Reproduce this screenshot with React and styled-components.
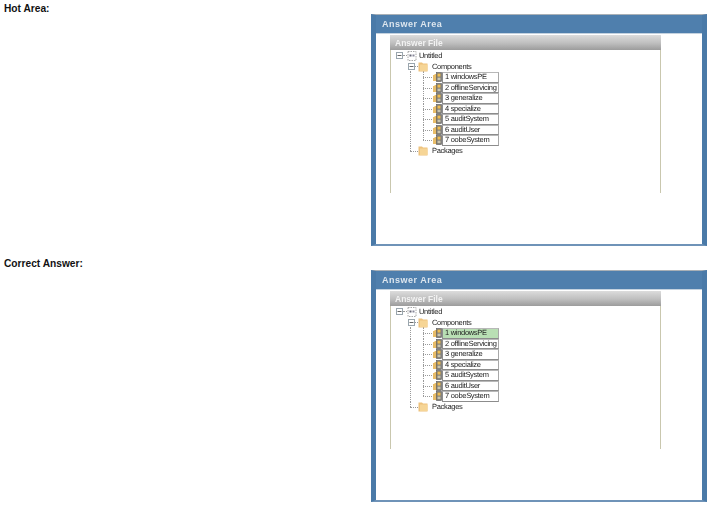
import styled, { createGlobalStyle } from "styled-components";

const GlobalStyle = createGlobalStyle`
  html, body {
    margin: 0;
    padding: 0;
    background: #fff;
  }
  body {
    font-family: "Liberation Sans", Arial, sans-serif;
  }
`;

const Page = styled.div`
  width: 712px;
  height: 508px;
  overflow: hidden;
  display: flex;
  flex-direction: column;
`;

const Section = styled.section`
  height: 256px;
  flex: none;
  display: flex;
`;

const Label = styled.div`
  width: 371px;
  flex: none;
  padding: ${(p) => p.$top}px 0 0 4px;
  box-sizing: border-box;
  font-size: 10.2px;
  font-weight: 700;
  line-height: 11px;
  color: #111;
`;

const Panel = styled.div`
  width: 336px;
  height: 232px;
  margin-top: 14px;
  box-sizing: border-box;
  border-top: 1px solid #a9b0b6;
  border-left: 5px solid #4a7aa8;
  border-right: 5px solid #4a7aa8;
  border-bottom: 2px solid #6f93b8;
  background: #fff;
  display: flex;
  flex-direction: column;
  filter: blur(0.4px);
`;

const TitleBar = styled.div`
  height: 18px;
  flex: none;
  padding-left: 6px;
  background: #4f7fad;
  border-bottom: 1px solid #c4d2df;
  color: #dde6ee;
  font-size: 9px;
  font-weight: 700;
  letter-spacing: 0.5px;
  line-height: 19px;
`;

const FileBox = styled.div`
  width: 271px;
  height: 158px;
  margin: 1px 0 0 14px;
  box-sizing: border-box;
  border-left: 1px solid #c9c7ae;
  border-right: 1px solid #c9c7ae;
`;

const FileHeader = styled.div`
  height: 15px;
  margin: 0 -1px;
  padding-left: 5px;
  background: linear-gradient(#dcdcdc, #bebebe 55%, #9c9c9c);
  color: #f2f2f2;
  font-size: 8.5px;
  font-weight: 700;
  line-height: 16px;
`;

const Tree = styled.div`
  display: flex;
  flex-direction: column;
  font-size: 7.5px;
  letter-spacing: -0.3px;
  text-rendering: geometricPrecision;
  color: #222;
`;

const TreeRow = styled.div`
  position: relative;
  height: ${(p) => (p.$item ? 10.5 : 11)}px;
  display: flex;
  align-items: center;
  padding-left: ${(p) => p.$indent}px;
`;

/* dotted connectors of the tree */
const Connector = styled.span`
  position: absolute;
  left: ${(p) => p.$left}px;
  top: ${(p) => p.$top ?? 5}px;
  width: ${(p) => p.$width ?? 1}px;
  height: ${(p) => p.$height ?? 1}px;
  border-top: ${(p) => (p.$height ? "none" : "1px dotted #999")};
  border-left: ${(p) => (p.$height ? "1px dotted #999" : "none")};
  box-sizing: border-box;
`;

const RowText = styled.span`
  margin-left: ${(p) => p.$gap}px;
  line-height: 10px;
  white-space: nowrap;
`;

const StepBox = styled.div`
  width: 57px;
  height: 10.5px;
  padding-left: 2px;
  box-sizing: border-box;
  background: ${(p) => (p.$correct ? "#b9dfb4" : "#fff")};
  border: 1px solid #8c8c8c;
  border-top-color: #b8b8b8;
  border-right-color: #a8a8a8;
  line-height: 8.5px;
  white-space: nowrap;
`;

const Glyph = styled.svg`
  flex: none;
  position: relative;
  margin-left: ${(p) => p.$gap ?? 0}px;
`;

const Toggle = () => (
  <Glyph width="7" height="7" viewBox="0 0 7 7">
    <rect x="0.5" y="0.5" width="6" height="6" fill="#fff" stroke="#9aa6ae" />
    <path d="M1.5 3.5h4" stroke="#666" />
  </Glyph>
);

const DocIcon = () => (
  <Glyph $gap={4} width="10" height="10" viewBox="0 0 10 10">
    <rect x="1" y="0.5" width="8" height="9" fill="#fff" stroke="#a8a8a8" strokeDasharray="1.5 1" />
    <rect x="2.5" y="3.5" width="2" height="2" fill="#667" />
    <rect x="5.5" y="3.5" width="2" height="2" fill="#889" />
  </Glyph>
);

const FolderIcon = ({ gap }) => (
  <Glyph $gap={gap} width="10" height="10" viewBox="0 1 10 10">
    <path d="M0.5 1.5h3.5l1 1h4.5v8h-9z" fill="#eec27c" />
    <path d="M2 3.5h7.5v6.5H2z" fill="#f6d596" />
  </Glyph>
);

const PassIcon = () => (
  <Glyph width="10" height="10" viewBox="0 0 10 10">
    <path d="M1 3h1l1-1h3v7H1z" fill="#e8bd6a" />
    <rect x="4.5" y="0.5" width="5" height="9" fill="#7c7a72" stroke="#5a5a5c" strokeWidth="0.6" />
    <rect x="5.5" y="1.6" width="3" height="3" fill="#eebc52" />
    <rect x="5.5" y="5.6" width="3" height="2.6" fill="#c9c4ae" />
  </Glyph>
);

const passes = [
  "1 windowsPE",
  "2 offlineServicing",
  "3 generalize",
  "4 specialize",
  "5 auditSystem",
  "6 auditUser",
  "7 oobeSystem",
];

function AnswerArea({ correct }) {
  return (
    <Panel>
      <TitleBar>Answer Area</TitleBar>
      <FileBox>
        <FileHeader>Answer File</FileHeader>
        <Tree>
          <TreeRow $indent={5}>
            <Connector $left={12} $width={4} />
            <Toggle />
            <DocIcon />
            <RowText $gap={2}>Untitled</RowText>
          </TreeRow>
          <TreeRow $indent={17}>
            <Connector $left={19} $top={8} $height={3} />
            <Connector $left={32} $top={8} $height={3} />
            <Toggle />
            <Connector $left={24} $width={3} />
            <FolderIcon gap={3} />
            <RowText $gap={4}>Components</RowText>
          </TreeRow>
          {passes.map((pass, i) => (
            <TreeRow key={pass} $item $indent={41}>
              <Connector $left={19} $height={11} $top={0} />
              <Connector $left={32} $top={0} $height={i === passes.length - 1 ? 5 : 11} />
              <Connector $left={32} $width={9} />
              <PassIcon />
              <StepBox $correct={correct && i === 0}>{pass}</StepBox>
            </TreeRow>
          ))}
          <TreeRow $indent={27}>
            <Connector $left={19} $top={-1} $height={6} />
            <Connector $left={19} $width={8} />
            <FolderIcon />
            <RowText $gap={4}>Packages</RowText>
          </TreeRow>
        </Tree>
      </FileBox>
    </Panel>
  );
}

export default function App() {
  return (
    <Page>
      <GlobalStyle />
      <Section>
        <Label $top={3}>Hot Area:</Label>
        <AnswerArea />
      </Section>
      <Section>
        <Label $top={2}>Correct Answer:</Label>
        <AnswerArea correct />
      </Section>
    </Page>
  );
}
